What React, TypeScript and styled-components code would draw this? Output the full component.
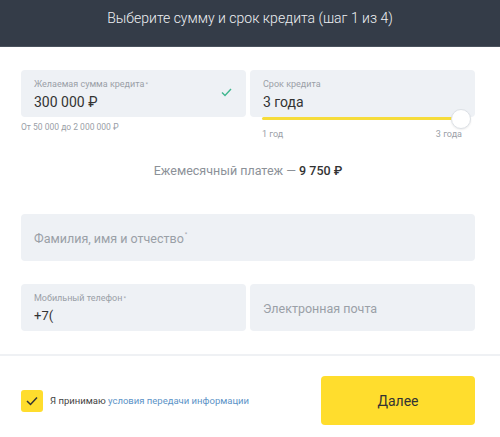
import React from "react";
import styled, { createGlobalStyle } from "styled-components";

const GlobalStyle = createGlobalStyle`
  * {
    box-sizing: border-box;
  }
  body {
    margin: 0;
    background: #fff;
    font-family: Roboto, "Noto Sans", sans-serif;
    color: #333;
  }
`;

const Page = styled.div`
  width: 500px;
  height: 437px;
  overflow: hidden;
  background: #fff;
`;

const Header = styled.header`
  height: 47px;
  background: #343c48;
  border-bottom: 1px solid #4a525d;
  display: flex;
  align-items: center;
  justify-content: center;
  color: #eef0f3;
  font-size: 14px;
  font-weight: 300;
  padding-bottom: 10px;
`;

const Content = styled.main`
  padding: 23px 25px 0 21px;
`;

const Row = styled.div<{ $gap?: number; $top?: number }>`
  display: flex;
  gap: ${(p) => p.$gap ?? 4}px;
  margin-top: ${(p) => p.$top ?? 0}px;
`;

const Column = styled.div`
  flex: 1;
  min-width: 0;
  display: flex;
  flex-direction: column;
`;

const Field = styled.div`
  position: relative;
  height: 47px;
  background: #eef1f5;
  border-radius: 4px;
  padding: 0 13px;
  display: flex;
  flex-direction: column;
  justify-content: center;
`;

const Label = styled.div`
  font-size: 9px;
  color: #9aa0a7;
  line-height: 11px;
  margin-top: 2px;
`;

const Value = styled.div<{ $size?: number }>`
  font-size: ${(p) => p.$size ?? 14}px;
  color: #333;
  line-height: 18px;
  margin-top: 3px;
`;

const Placeholder = styled.div`
  font-size: 12.5px;
  color: #9aa0a7;
  margin-top: 1px;
`;

const Star = styled.span`
  font-size: 6px;
  vertical-align: top;
  position: relative;
  top: -1px;
  margin-left: 1px;
`;

const CheckMark = styled.svg`
  position: absolute;
  right: 14px;
  top: 18px;
`;

const Hint = styled.div`
  font-size: 8.5px;
  color: #9aa0a7;
  margin-top: 5px;
`;

const Track = styled.div`
  position: absolute;
  left: 12px;
  right: 14px;
  bottom: -3px;
  height: 3px;
  background: #f6dc3a;
  border-radius: 2px;
`;

const Thumb = styled.div`
  position: absolute;
  right: -10px;
  top: -8px;
  width: 20px;
  height: 20px;
  border-radius: 50%;
  background: #fff;
  border: 1px solid #dde1e6;
  box-shadow: 0 1px 2px rgba(0, 0, 0, 0.08);
`;

const RangeLabels = styled.div`
  display: flex;
  justify-content: space-between;
  padding: 0 13px 0 12px;
  margin-top: 12px;
  font-size: 9px;
  color: #9aa0a7;
`;

const Monthly = styled.div`
  text-align: center;
  font-size: 12.5px;
  color: #8c9198;
  margin-top: 24px;
  b {
    color: #333;
    font-weight: 500;
  }
`;

const Divider = styled.hr`
  border: none;
  height: 2px;
  background: #eff1f4;
  margin: 23px 0 0;
`;

const Footer = styled.footer`
  display: flex;
  align-items: center;
  justify-content: space-between;
  padding: 20px 25px 0 21px;
`;

const Agree = styled.label`
  display: flex;
  align-items: center;
  gap: 7px;
  font-size: 9.5px;
  color: #444;
`;

const Box = styled.span`
  width: 22px;
  height: 22px;
  border-radius: 3px;
  background: #ffdd2d;
  display: flex;
  align-items: center;
  justify-content: center;
`;

const Link = styled.a`
  color: #5b93c7;
  text-decoration: none;
`;

const NextButton = styled.button`
  width: 154px;
  height: 49px;
  border: none;
  border-radius: 4px;
  background: #ffdd2d;
  color: #333;
  font-family: inherit;
  font-size: 14px;
`;

export default function App() {
  return (
    <Page>
      <GlobalStyle />
      <Header>Выберите сумму и срок кредита (шаг 1 из 4)</Header>
      <Content>
        <Row>
          <Column>
            <Field>
              <Label>
                Желаемая сумма кредита<Star>*</Star>
              </Label>
              <Value>300 000 ₽</Value>
              <CheckMark width="11" height="9" viewBox="0 0 11 9">
                <path d="M1 4.5 L4 7.5 L10 1" fill="none" stroke="#3fb68e" strokeWidth="1.4" />
              </CheckMark>
            </Field>
            <Hint>От 50 000 до 2 000 000 ₽</Hint>
          </Column>
          <Column>
            <Field>
              <Label>Срок кредита</Label>
              <Value>3 года</Value>
              <Track>
                <Thumb />
              </Track>
            </Field>
            <RangeLabels>
              <span>1 год</span>
              <span>3 года</span>
            </RangeLabels>
          </Column>
        </Row>

        <Monthly>
          Ежемесячный платеж — <b>9 750 ₽</b>
        </Monthly>

        <Row $top={36}>
          <Column>
            <Field>
              <Placeholder>
                Фамилия, имя и отчество<Star>*</Star>
              </Placeholder>
            </Field>
          </Column>
        </Row>

        <Row $top={23}>
          <Column>
            <Field>
              <Label>
                Мобильный телефон<Star>*</Star>
              </Label>
              <Value $size={13}>+7(</Value>
            </Field>
          </Column>
          <Column>
            <Field>
              <Placeholder>Электронная почта</Placeholder>
            </Field>
          </Column>
        </Row>
      </Content>

      <Divider />

      <Footer>
        <Agree>
          <Box>
            <svg width="12" height="10" viewBox="0 0 12 10">
              <path d="M1 5 L4.5 8.5 L11 1.5" fill="none" stroke="#333" strokeWidth="1.5" />
            </svg>
          </Box>
          <span>
            Я принимаю <Link href="#">условия передачи информации</Link>
          </span>
        </Agree>
        <NextButton>Далее</NextButton>
      </Footer>
    </Page>
  );
}
